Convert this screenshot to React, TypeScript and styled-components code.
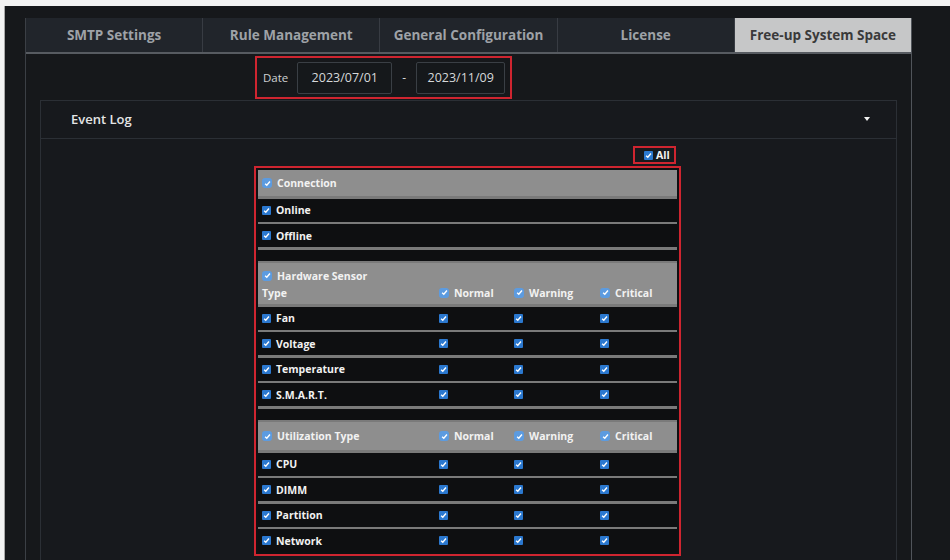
import React from "react";
import styled, { createGlobalStyle } from "styled-components";

const GlobalStyle = createGlobalStyle`
  html, body {
    margin: 0;
    padding: 0;
    background: #f3f3f3;
    font-family: "Open Sans", "Liberation Sans", sans-serif;
  }
  * {
    box-sizing: border-box;
  }
`;

const RED = "#cf2530";

const Frame = styled.div`
  margin: 6px 0 0 4px;
  height: 554px;
  background: #16181b;
  border-left: 1px solid #a9a9a9;
  padding: 12px 0 0 20px;
  overflow: hidden;
`;

const Panel = styled.div`
  width: 887px;
  height: 100%;
  border-left: 1px solid #3b3f45;
  border-right: 1px solid #50545a;
`;

const TabBar = styled.div`
  display: flex;
  height: 36px;
  background: #21252b;
  border-bottom: 2px solid #575b61;
`;

const Tab = styled.div<{ $active?: boolean }>`
  flex: 1;
  display: flex;
  align-items: center;
  justify-content: center;
  font-size: 13.5px;
  font-weight: 700;
  color: ${(p) => (p.$active ? "#3a3a3a" : "#9ea2a7")};
  background: ${(p) => (p.$active ? "#c6c7c8" : "transparent")};
  border-right: 1px solid #383c43;
  &:last-child {
    border-right: none;
  }
`;

const DateRow = styled.div`
  padding: 2px 0 0 229px;
`;

const DateBox = styled.div`
  display: inline-flex;
  align-items: center;
  height: 43px;
  border: 2px solid ${RED};
  padding: 0 5px 0 6px;
`;

const DateLabel = styled.span`
  font-size: 11.5px;
  color: #cfd1d3;
  margin-right: 9px;
`;

const DateInput = styled.div<{ $w: number }>`
  width: ${(p) => p.$w}px;
  height: 32px;
  display: flex;
  align-items: center;
  justify-content: center;
  background: #15181b;
  border: 1px solid #3a3f45;
  border-radius: 2px;
  font-size: 12.5px;
  color: #d6d8da;
`;

const Dash = styled.span`
  font-size: 12px;
  color: #d6d8da;
  margin: 0 10px 0 10px;
`;

const Card = styled.div`
  margin: 1px 14px 0 14px;
  height: 470px;
  border: 1px solid #2b2f35;
  border-bottom: none;
  background: #17191d;
`;

const CardHeader = styled.div`
  height: 38px;
  display: flex;
  align-items: center;
  justify-content: space-between;
  padding: 0 26px 2px 30px;
  border-bottom: 1px solid #2b2f35;
  font-size: 13px;
  font-weight: 600;
  color: #e4e5e6;
`;

const Caret = styled.span`
  width: 0;
  height: 0;
  border-left: 3px solid transparent;
  border-right: 3px solid transparent;
  border-top: 4px solid #f2f2f2;
`;

const CardBody = styled.div`
  padding: 7px 0 0 213px;
`;

const Filters = styled.div`
  width: 427px;
  display: flex;
  flex-direction: column;
  align-items: flex-end;
`;

const AllBox = styled.div`
  display: flex;
  align-items: center;
  gap: 3px;
  height: 18px;
  width: 43px;
  margin-right: 5px;
  padding-left: 9px;
  border: 2px solid ${RED};
  font-size: 10.5px;
  font-weight: 700;
  color: #f4f4f4;
`;

const TableBox = styled.div`
  width: 427px;
  margin-top: 2px;
  border: 2px solid ${RED};
  padding: 2px;
  background: #0f1012;
`;

const Rows = styled.div`
  display: flex;
  flex-direction: column;
  gap: 2.5px;
  background: #7a7a7a;
`;

const Row = styled.div<{ $h: number; $head?: boolean }>`
  height: ${(p) => p.$h}px;
  flex-shrink: 0;
  background: ${(p) => (p.$head ? "#8e8e8e" : "#0e0f11")};
  display: grid;
  grid-template-columns: 177px 75px 86px 1fr;
  align-items: center;
  padding-left: 4px;
  font-size: 10.5px;
  font-weight: 700;
  color: #f2f2f2;
`;

const HeadStack = styled.div`
  height: 41px;
  flex-shrink: 0;
  background: #8e8e8e;
  display: flex;
  flex-direction: column;
  padding-top: 4px;
`;

const Cell = styled.div`
  display: flex;
  align-items: center;
  gap: 5px;
  white-space: nowrap;
`;

const Box = styled.span<{ $soft?: boolean }>`
  width: ${(p) => (p.$soft ? 10 : 9)}px;
  height: ${(p) => (p.$soft ? 10 : 9)}px;
  border-radius: ${(p) => (p.$soft ? 3 : 1)}px;
  background: ${(p) => (p.$soft ? "#5c9be0" : "#2b78cf")};
  display: inline-flex;
  align-items: center;
  justify-content: center;
  flex-shrink: 0;
`;

const Check: React.FC<{ soft?: boolean }> = ({ soft }) => (
  <Box $soft={soft}>
    <svg width="7" height="7" viewBox="0 0 8 8">
      <path d="M1.3 4.2 L3.2 6 L6.8 1.8" fill="none" stroke="#fff" strokeWidth="1.6" />
    </svg>
  </Box>
);

const levels = ["Normal", "Warning", "Critical"];

const LevelHeads: React.FC = () => (
  <>
    {levels.map((l) => (
      <Cell key={l}>
        <Check soft />
        {l}
      </Cell>
    ))}
  </>
);

const ItemRow: React.FC<{ label: string; levels?: boolean }> = ({ label, levels: withLevels }) => (
  <Row $h={23}>
    <Cell>
      <Check />
      {label}
    </Cell>
    {withLevels && (
      <>
        <Cell>
          <Check />
        </Cell>
        <Cell>
          <Check />
        </Cell>
        <Cell>
          <Check />
        </Cell>
      </>
    )}
  </Row>
);

const Spacer = styled.div`
  height: 11px;
  flex-shrink: 0;
  background: #0e0f11;
`;

const tabs = ["SMTP Settings", "Rule Management", "General Configuration", "License", "Free-up System Space"];

export default function App() {
  return (
    <>
      <GlobalStyle />
      <Frame>
        <Panel>
          <TabBar>
            {tabs.map((t, i) => (
              <Tab key={t} $active={i === tabs.length - 1}>
                {t}
              </Tab>
            ))}
          </TabBar>
          <DateRow>
            <DateBox>
              <DateLabel>Date</DateLabel>
              <DateInput $w={95}>2023/07/01</DateInput>
              <Dash>-</Dash>
              <DateInput $w={89}>2023/11/09</DateInput>
            </DateBox>
          </DateRow>
          <Card>
            <CardHeader>
              Event Log
              <Caret />
            </CardHeader>
            <CardBody>
              <Filters>
                <AllBox>
                  <Check />
                  All
                </AllBox>
                <TableBox>
                  <Rows>
                    <Row $h={26} $head>
                      <Cell>
                        <Check soft />
                        Connection
                      </Cell>
                    </Row>
                    <ItemRow label="Online" />
                    <ItemRow label="Offline" />
                    <Spacer />
                    <HeadStack>
                      <Row $h={17} $head>
                        <Cell>
                          <Check soft />
                          Hardware Sensor
                        </Cell>
                      </Row>
                      <Row $h={17} $head>
                        <Cell>Type</Cell>
                        <LevelHeads />
                      </Row>
                    </HeadStack>
                    <ItemRow label="Fan" levels />
                    <ItemRow label="Voltage" levels />
                    <ItemRow label="Temperature" levels />
                    <ItemRow label="S.M.A.R.T." levels />
                    <Spacer />
                    <Row $h={28} $head>
                      <Cell>
                        <Check soft />
                        Utilization Type
                      </Cell>
                      <LevelHeads />
                    </Row>
                    <ItemRow label="CPU" levels />
                    <ItemRow label="DIMM" levels />
                    <ItemRow label="Partition" levels />
                    <ItemRow label="Network" levels />
                  </Rows>
                </TableBox>
              </Filters>
            </CardBody>
          </Card>
        </Panel>
      </Frame>
    </>
  );
}
